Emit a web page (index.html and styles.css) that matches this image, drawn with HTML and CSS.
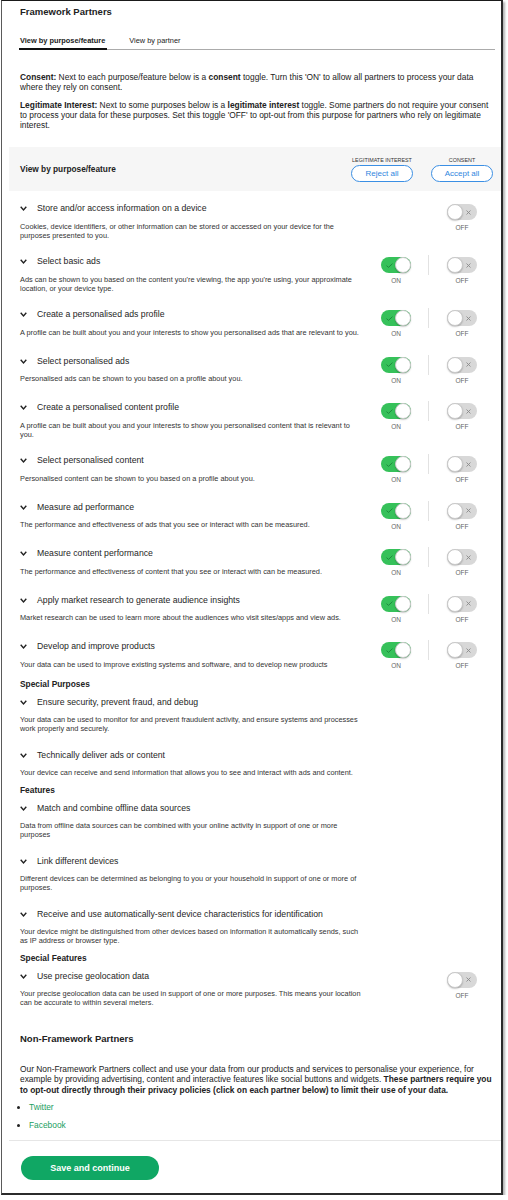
FILE: index.html
```html
<!DOCTYPE html>
<html lang="en">
<head>
<meta charset="utf-8">
<title>Framework Partners</title>
<link rel="stylesheet" href="styles.css">
</head>
<body>
<div class="frame">
  <div class="top">
    <h1 class="title">Framework Partners</h1>
    <div class="tabs">
      <span class="tab active">View by purpose/feature</span>
      <span class="tab">View by partner</span>
    </div>
    <p class="intro first"><b>Consent:</b> Next to each purpose/feature below is a <b>consent</b> toggle. Turn this 'ON' to allow all partners to process your data where they rely on consent.</p>
    <p class="intro"><b>Legitimate Interest:</b> Next to some purposes below is a <b>legitimate interest</b> toggle. Some partners do not require your consent to process your data for these purposes. Set this toggle 'OFF' to opt-out from this purpose for partners who rely on legitimate interest.</p>
  </div>

  <div class="band">
    <div class="band-title">View by purpose/feature</div>
    <div class="band-actions">
      <div class="band-col"><span class="cap">LEGITIMATE INTEREST</span><button class="pill">Reject all</button></div>
      <div class="band-col"><span class="cap">CONSENT</span><button class="pill">Accept all</button></div>
    </div>
  </div>

  <div class="list">
    <div class="row">
      <div class="txt">
        <div class="rt"><svg class="chev" width="7" height="5" viewBox="0 0 7 5"><path d="M0.7 0.8 L3.5 3.9 L6.3 0.8" fill="none" stroke="#222" stroke-width="1.4"/></svg>Store and/or access information on a device</div>
        <div class="rd">Cookies, device identifiers, or other information can be stored or accessed on your device for the purposes presented to you.</div>
      </div>
      <div class="tgl">
        <div class="cell"></div><div class="gap"></div>
        <div class="cell"><span class="tg off"><svg width="5" height="5" viewBox="0 0 5 5"><path d="M0.5 0.5 L4.5 4.5 M4.5 0.5 L0.5 4.5" stroke="#8a8a8a" stroke-width="0.9"/></svg></span><span class="lbl">OFF</span></div>
      </div>
    </div>

    <div class="row">
      <div class="txt">
        <div class="rt"><svg class="chev" width="7" height="5" viewBox="0 0 7 5"><path d="M0.7 0.8 L3.5 3.9 L6.3 0.8" fill="none" stroke="#222" stroke-width="1.4"/></svg>Select basic ads</div>
        <div class="rd">Ads can be shown to you based on the content you're viewing, the app you're using, your approximate location, or your device type.</div>
      </div>
      <div class="tgl">
        <div class="cell"><span class="tg on"><svg width="7" height="5" viewBox="0 0 7 5"><path d="M0.5 2.6 L2.5 4.4 L6.5 0.6" fill="none" stroke="#1f8a3e" stroke-width="1"/></svg></span><span class="lbl">ON</span></div><div class="divider"></div>
        <div class="cell"><span class="tg off"><svg width="5" height="5" viewBox="0 0 5 5"><path d="M0.5 0.5 L4.5 4.5 M4.5 0.5 L0.5 4.5" stroke="#8a8a8a" stroke-width="0.9"/></svg></span><span class="lbl">OFF</span></div>
      </div>
    </div>

    <div class="row">
      <div class="txt">
        <div class="rt"><svg class="chev" width="7" height="5" viewBox="0 0 7 5"><path d="M0.7 0.8 L3.5 3.9 L6.3 0.8" fill="none" stroke="#222" stroke-width="1.4"/></svg>Create a personalised ads profile</div>
        <div class="rd">A profile can be built about you and your interests to show you personalised ads that are relevant to you.</div>
      </div>
      <div class="tgl">
        <div class="cell"><span class="tg on"><svg width="7" height="5" viewBox="0 0 7 5"><path d="M0.5 2.6 L2.5 4.4 L6.5 0.6" fill="none" stroke="#1f8a3e" stroke-width="1"/></svg></span><span class="lbl">ON</span></div><div class="divider"></div>
        <div class="cell"><span class="tg off"><svg width="5" height="5" viewBox="0 0 5 5"><path d="M0.5 0.5 L4.5 4.5 M4.5 0.5 L0.5 4.5" stroke="#8a8a8a" stroke-width="0.9"/></svg></span><span class="lbl">OFF</span></div>
      </div>
    </div>

    <div class="row">
      <div class="txt">
        <div class="rt"><svg class="chev" width="7" height="5" viewBox="0 0 7 5"><path d="M0.7 0.8 L3.5 3.9 L6.3 0.8" fill="none" stroke="#222" stroke-width="1.4"/></svg>Select personalised ads</div>
        <div class="rd">Personalised ads can be shown to you based on a profile about you.</div>
      </div>
      <div class="tgl">
        <div class="cell"><span class="tg on"><svg width="7" height="5" viewBox="0 0 7 5"><path d="M0.5 2.6 L2.5 4.4 L6.5 0.6" fill="none" stroke="#1f8a3e" stroke-width="1"/></svg></span><span class="lbl">ON</span></div><div class="divider"></div>
        <div class="cell"><span class="tg off"><svg width="5" height="5" viewBox="0 0 5 5"><path d="M0.5 0.5 L4.5 4.5 M4.5 0.5 L0.5 4.5" stroke="#8a8a8a" stroke-width="0.9"/></svg></span><span class="lbl">OFF</span></div>
      </div>
    </div>

    <div class="row">
      <div class="txt">
        <div class="rt"><svg class="chev" width="7" height="5" viewBox="0 0 7 5"><path d="M0.7 0.8 L3.5 3.9 L6.3 0.8" fill="none" stroke="#222" stroke-width="1.4"/></svg>Create a personalised content profile</div>
        <div class="rd">A profile can be built about you and your interests to show you personalised content that is relevant to you.</div>
      </div>
      <div class="tgl">
        <div class="cell"><span class="tg on"><svg width="7" height="5" viewBox="0 0 7 5"><path d="M0.5 2.6 L2.5 4.4 L6.5 0.6" fill="none" stroke="#1f8a3e" stroke-width="1"/></svg></span><span class="lbl">ON</span></div><div class="divider"></div>
        <div class="cell"><span class="tg off"><svg width="5" height="5" viewBox="0 0 5 5"><path d="M0.5 0.5 L4.5 4.5 M4.5 0.5 L0.5 4.5" stroke="#8a8a8a" stroke-width="0.9"/></svg></span><span class="lbl">OFF</span></div>
      </div>
    </div>

    <div class="row">
      <div class="txt">
        <div class="rt"><svg class="chev" width="7" height="5" viewBox="0 0 7 5"><path d="M0.7 0.8 L3.5 3.9 L6.3 0.8" fill="none" stroke="#222" stroke-width="1.4"/></svg>Select personalised content</div>
        <div class="rd">Personalised content can be shown to you based on a profile about you.</div>
      </div>
      <div class="tgl">
        <div class="cell"><span class="tg on"><svg width="7" height="5" viewBox="0 0 7 5"><path d="M0.5 2.6 L2.5 4.4 L6.5 0.6" fill="none" stroke="#1f8a3e" stroke-width="1"/></svg></span><span class="lbl">ON</span></div><div class="divider"></div>
        <div class="cell"><span class="tg off"><svg width="5" height="5" viewBox="0 0 5 5"><path d="M0.5 0.5 L4.5 4.5 M4.5 0.5 L0.5 4.5" stroke="#8a8a8a" stroke-width="0.9"/></svg></span><span class="lbl">OFF</span></div>
      </div>
    </div>

    <div class="row">
      <div class="txt">
        <div class="rt"><svg class="chev" width="7" height="5" viewBox="0 0 7 5"><path d="M0.7 0.8 L3.5 3.9 L6.3 0.8" fill="none" stroke="#222" stroke-width="1.4"/></svg>Measure ad performance</div>
        <div class="rd">The performance and effectiveness of ads that you see or interact with can be measured.</div>
      </div>
      <div class="tgl">
        <div class="cell"><span class="tg on"><svg width="7" height="5" viewBox="0 0 7 5"><path d="M0.5 2.6 L2.5 4.4 L6.5 0.6" fill="none" stroke="#1f8a3e" stroke-width="1"/></svg></span><span class="lbl">ON</span></div><div class="divider"></div>
        <div class="cell"><span class="tg off"><svg width="5" height="5" viewBox="0 0 5 5"><path d="M0.5 0.5 L4.5 4.5 M4.5 0.5 L0.5 4.5" stroke="#8a8a8a" stroke-width="0.9"/></svg></span><span class="lbl">OFF</span></div>
      </div>
    </div>

    <div class="row">
      <div class="txt">
        <div class="rt"><svg class="chev" width="7" height="5" viewBox="0 0 7 5"><path d="M0.7 0.8 L3.5 3.9 L6.3 0.8" fill="none" stroke="#222" stroke-width="1.4"/></svg>Measure content performance</div>
        <div class="rd">The performance and effectiveness of content that you see or interact with can be measured.</div>
      </div>
      <div class="tgl">
        <div class="cell"><span class="tg on"><svg width="7" height="5" viewBox="0 0 7 5"><path d="M0.5 2.6 L2.5 4.4 L6.5 0.6" fill="none" stroke="#1f8a3e" stroke-width="1"/></svg></span><span class="lbl">ON</span></div><div class="divider"></div>
        <div class="cell"><span class="tg off"><svg width="5" height="5" viewBox="0 0 5 5"><path d="M0.5 0.5 L4.5 4.5 M4.5 0.5 L0.5 4.5" stroke="#8a8a8a" stroke-width="0.9"/></svg></span><span class="lbl">OFF</span></div>
      </div>
    </div>

    <div class="row">
      <div class="txt">
        <div class="rt"><svg class="chev" width="7" height="5" viewBox="0 0 7 5"><path d="M0.7 0.8 L3.5 3.9 L6.3 0.8" fill="none" stroke="#222" stroke-width="1.4"/></svg>Apply market research to generate audience insights</div>
        <div class="rd">Market research can be used to learn more about the audiences who visit sites/apps and view ads.</div>
      </div>
      <div class="tgl">
        <div class="cell"><span class="tg on"><svg width="7" height="5" viewBox="0 0 7 5"><path d="M0.5 2.6 L2.5 4.4 L6.5 0.6" fill="none" stroke="#1f8a3e" stroke-width="1"/></svg></span><span class="lbl">ON</span></div><div class="divider"></div>
        <div class="cell"><span class="tg off"><svg width="5" height="5" viewBox="0 0 5 5"><path d="M0.5 0.5 L4.5 4.5 M4.5 0.5 L0.5 4.5" stroke="#8a8a8a" stroke-width="0.9"/></svg></span><span class="lbl">OFF</span></div>
      </div>
    </div>

    <div class="row">
      <div class="txt">
        <div class="rt"><svg class="chev" width="7" height="5" viewBox="0 0 7 5"><path d="M0.7 0.8 L3.5 3.9 L6.3 0.8" fill="none" stroke="#222" stroke-width="1.4"/></svg>Develop and improve products</div>
        <div class="rd">Your data can be used to improve existing systems and software, and to develop new products</div>
      </div>
      <div class="tgl">
        <div class="cell"><span class="tg on"><svg width="7" height="5" viewBox="0 0 7 5"><path d="M0.5 2.6 L2.5 4.4 L6.5 0.6" fill="none" stroke="#1f8a3e" stroke-width="1"/></svg></span><span class="lbl">ON</span></div><div class="divider"></div>
        <div class="cell"><span class="tg off"><svg width="5" height="5" viewBox="0 0 5 5"><path d="M0.5 0.5 L4.5 4.5 M4.5 0.5 L0.5 4.5" stroke="#8a8a8a" stroke-width="0.9"/></svg></span><span class="lbl">OFF</span></div>
      </div>
    </div>

    <h3 class="sub">Special Purposes</h3>
    <div class="row">
      <div class="txt">
        <div class="rt"><svg class="chev" width="7" height="5" viewBox="0 0 7 5"><path d="M0.7 0.8 L3.5 3.9 L6.3 0.8" fill="none" stroke="#222" stroke-width="1.4"/></svg>Ensure security, prevent fraud, and debug</div>
        <div class="rd">Your data can be used to monitor for and prevent fraudulent activity, and ensure systems and processes work properly and securely.</div>
      </div>
    </div>
    <div class="row">
      <div class="txt">
        <div class="rt"><svg class="chev" width="7" height="5" viewBox="0 0 7 5"><path d="M0.7 0.8 L3.5 3.9 L6.3 0.8" fill="none" stroke="#222" stroke-width="1.4"/></svg>Technically deliver ads or content</div>
        <div class="rd">Your device can receive and send information that allows you to see and interact with ads and content.</div>
      </div>
    </div>

    <h3 class="sub">Features</h3>
    <div class="row">
      <div class="txt">
        <div class="rt"><svg class="chev" width="7" height="5" viewBox="0 0 7 5"><path d="M0.7 0.8 L3.5 3.9 L6.3 0.8" fill="none" stroke="#222" stroke-width="1.4"/></svg>Match and combine offline data sources</div>
        <div class="rd">Data from offline data sources can be combined with your online activity in support of one or more purposes</div>
      </div>
    </div>
    <div class="row">
      <div class="txt">
        <div class="rt"><svg class="chev" width="7" height="5" viewBox="0 0 7 5"><path d="M0.7 0.8 L3.5 3.9 L6.3 0.8" fill="none" stroke="#222" stroke-width="1.4"/></svg>Link different devices</div>
        <div class="rd">Different devices can be determined as belonging to you or your household in support of one or more of purposes.</div>
      </div>
    </div>
    <div class="row">
      <div class="txt">
        <div class="rt"><svg class="chev" width="7" height="5" viewBox="0 0 7 5"><path d="M0.7 0.8 L3.5 3.9 L6.3 0.8" fill="none" stroke="#222" stroke-width="1.4"/></svg>Receive and use automatically-sent device characteristics for identification</div>
        <div class="rd">Your device might be distinguished from other devices based on information it automatically sends, such as IP address or browser type.</div>
      </div>
    </div>

    <h3 class="sub">Special Features</h3>
    <div class="row">
      <div class="txt">
        <div class="rt"><svg class="chev" width="7" height="5" viewBox="0 0 7 5"><path d="M0.7 0.8 L3.5 3.9 L6.3 0.8" fill="none" stroke="#222" stroke-width="1.4"/></svg>Use precise geolocation data</div>
        <div class="rd">Your precise geolocation data can be used in support of one or more purposes. This means your location can be accurate to within several meters.</div>
      </div>
      <div class="tgl">
        <div class="cell"></div><div class="gap"></div>
        <div class="cell"><span class="tg off"><svg width="5" height="5" viewBox="0 0 5 5"><path d="M0.5 0.5 L4.5 4.5 M4.5 0.5 L0.5 4.5" stroke="#8a8a8a" stroke-width="0.9"/></svg></span><span class="lbl">OFF</span></div>
      </div>
    </div>
  </div>

  <div class="nf">
    <h2 class="nf-title">Non-Framework Partners</h2>
    <p class="nf-text">Our Non-Framework Partners collect and use your data from our products and services to personalise your experience, for example by providing advertising, content and interactive features like social buttons and widgets. <b>These partners require you to opt-out directly through their privacy policies (click on each partner below) to limit their use of your data.</b></p>
    <ul class="links">
      <li><a href="#">Twitter</a></li>
      <li><a href="#">Facebook</a></li>
    </ul>
  </div>
  <div class="sep"></div>
  <button class="save">Save and continue</button>
</div>
</body>
</html>
```

FILE: styles.css
```css
html, body {
  margin: 0;
  padding: 0;
  background: #fff;
}
body {
  font-family: "Liberation Sans", Arial, Helvetica, sans-serif;
  color: #222;
}
.frame {
  box-sizing: border-box;
  margin-left: 1px;
  width: 502px;
  height: 1195px;
  border-top: 1px solid #1a1a1a;
  border-left: 1px solid #5a5a5a;
  border-right: 2px solid #2b2b2b;
  border-bottom: 2px solid #2b2b2b;
  box-shadow: 2px 2px 2px rgba(0, 0, 0, 0.3);
  padding-left: 7px;
  background: #fff;
}
.top {
  padding: 5px 6px 0 11px;
}
.title {
  margin: 0;
  font-size: 9.5px;
  line-height: 12px;
  font-weight: bold;
  color: #222;
}
.tabs {
  margin-top: 18px;
  display: flex;
  gap: 21px;
  border-bottom: 1px solid #ababab;
}
.tab {
  font-size: 7.4px;
  line-height: 10px;
  padding: 0 1.5px 2px;
  margin-bottom: -1px;
  border-bottom: 2px solid transparent;
  color: #222;
}
.tab.active {
  font-weight: bold;
  border-bottom-color: #111;
  margin-left: -1.5px;
}
.intro {
  margin: 8px 0 0;
  font-size: 8.4px;
  line-height: 10px;
  color: #222;
}
.intro.first {
  margin-top: 22px;
}
.band {
  margin-top: 17px;
  height: 44px;
  box-sizing: border-box;
  background: #f6f6f6;
  padding: 9px 8px 9px 11px;
  display: flex;
  align-items: center;
  justify-content: space-between;
}
.band-title {
  font-size: 8.3px;
  font-weight: bold;
  color: #222;
}
.band-actions {
  display: flex;
  gap: 18px;
}
.band-col {
  width: 62px;
  display: flex;
  flex-direction: column;
  align-items: center;
}
.cap {
  font-size: 5.4px;
  line-height: 8px;
  color: #333;
  white-space: nowrap;
  margin-bottom: 1px;
}
.pill {
  width: 62px;
  height: 17px;
  border: 1px solid #3b8fe4;
  border-radius: 9px;
  background: #fff;
  color: #2f86de;
  font-family: inherit;
  font-size: 8px;
  padding: 0;
}
.list {
  margin-top: 2px;
  padding: 0 8px 0 11px;
}
.row {
  display: flex;
  padding: 8px 0 6.5px;
}
.txt {
  flex: 1;
  min-width: 0;
}
.rt {
  display: flex;
  align-items: center;
  font-size: 8.7px;
  line-height: 14px;
  color: #1e1e1e;
}
.chev {
  flex: none;
  margin-right: 10px;
  margin-top: 1px;
}
.rd {
  margin-top: 6.5px;
  max-width: 346px;
  font-size: 7.35px;
  line-height: 9px;
  color: #333;
}
.tgl {
  display: flex;
  margin-left: 3px;
}
.cell {
  width: 62px;
  display: flex;
  flex-direction: column;
  align-items: center;
  padding-top: 3px;
}
.divider {
  width: 1px;
  height: 20px;
  margin: 1px 2px 0 1px;
  background: #e2e2e2;
}
.gap {
  width: 1px;
  margin: 0 2px 0 1px;
}
.tg {
  position: relative;
  display: block;
  width: 30px;
  height: 16px;
  border-radius: 8px;
}
.tg.on {
  background: #36c15a;
}
.tg.off {
  background: #d8d8d8;
}
.tg::after {
  content: "";
  position: absolute;
  top: 0;
  width: 16px;
  height: 16px;
  box-sizing: border-box;
  border-radius: 50%;
  background: #fff;
  border: 0.5px solid #c9c9c9;
  box-shadow: 0 1px 1.5px rgba(0, 0, 0, 0.22);
}
.tg.on::after {
  right: 0;
}
.tg.off::after {
  left: 0;
}
.tg svg {
  position: absolute;
  top: 5.5px;
}
.tg.on svg {
  left: 5px;
}
.tg.off svg {
  right: 6px;
}
.lbl {
  margin-top: 3px;
  font-size: 6.5px;
  line-height: 10px;
  color: #666;
}
.sub {
  margin: 0 0 -3px;
  font-size: 8.4px;
  line-height: 12px;
  font-weight: bold;
  color: #222;
}
.nf {
  padding: 0 6px 0 11px;
}
.nf-title {
  margin: 19px 0 0;
  font-size: 9.5px;
  line-height: 12px;
  font-weight: bold;
  color: #222;
}
.nf-text {
  margin: 19px 0 0;
  font-size: 8.4px;
  line-height: 10.5px;
  color: #222;
}
.links {
  margin: 7px 0 0;
  padding-left: 9px;
  font-size: 8.4px;
  line-height: 10px;
}
.links li + li {
  margin-top: 8px;
}
.links a {
  color: #1b9e5f;
  text-decoration: none;
}
.sep {
  margin-top: 10px;
  height: 1px;
  background: #e6e6e6;
}
.save {
  display: block;
  margin: 15px 0 0 12px;
  width: 138px;
  height: 24px;
  border: none;
  border-radius: 12px;
  background: #10a764;
  color: #fff;
  font-family: inherit;
  font-size: 9px;
  font-weight: bold;
  padding: 0;
}
```
